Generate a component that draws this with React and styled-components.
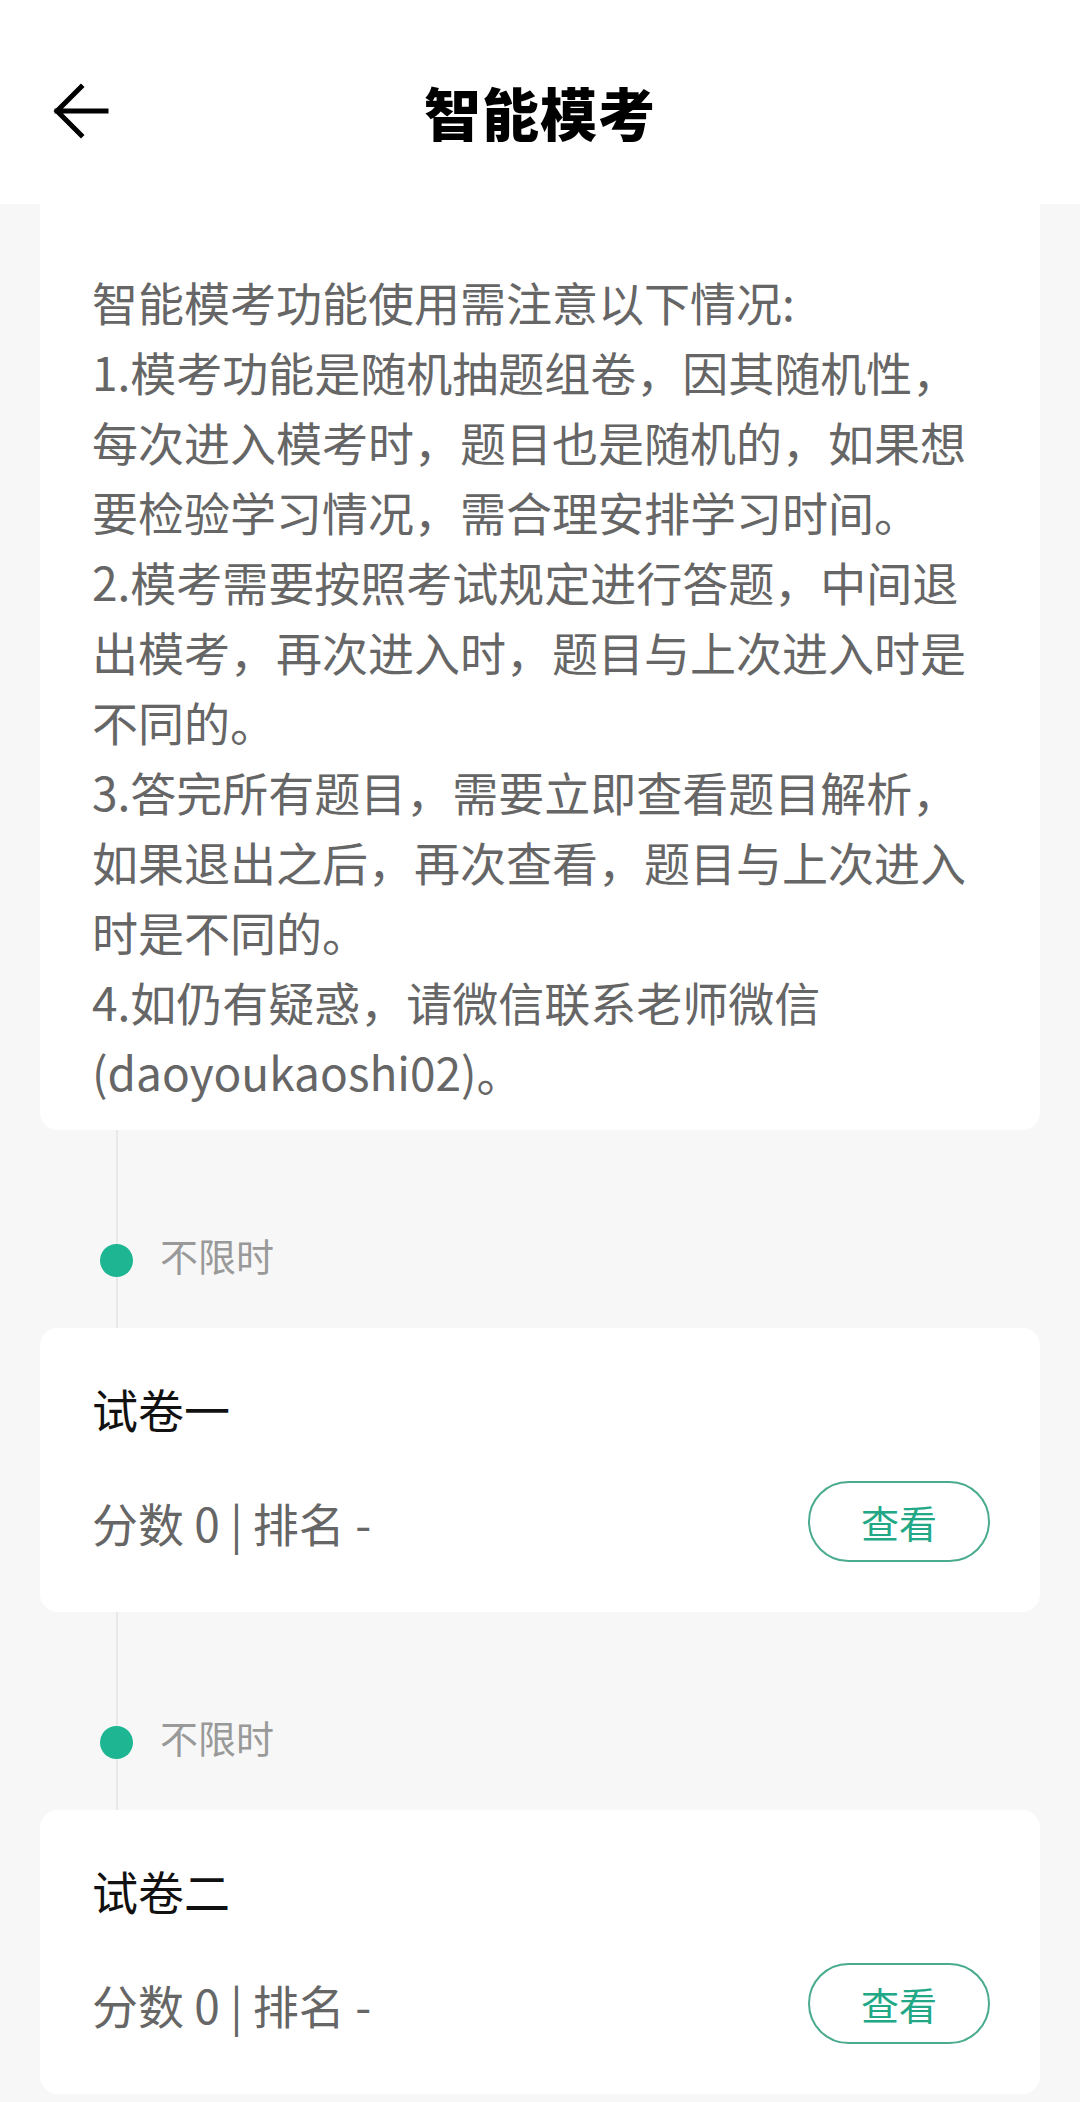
import styled, { createGlobalStyle } from "styled-components";

// ---------- Global ----------
const GlobalStyle = createGlobalStyle`
  html, body {
    margin: 0;
    padding: 0;
    background: #f7f7f7;
  }
  body {
    font-family: "Noto Sans CJK SC", "Noto Sans", sans-serif;
  }
  * {
    box-sizing: border-box;
  }
`;

// ---------- Styled components ----------
const Page = styled.div`
  width: 1080px;
  min-height: 2102px;
  background: #f7f7f7;
  overflow: hidden;
`;

const Header = styled.header`
  height: 204px;
  background: #fff;
  padding-top: 55px;
`;

const HeaderBar = styled.div`
  position: relative;
  height: 112px;
  display: flex;
  align-items: center;
  justify-content: center;
`;

const BackButton = styled.button`
  position: absolute;
  left: 48px;
  top: 28px;
  width: 64px;
  height: 56px;
  padding: 0;
  border: none;
  background: none;
  display: flex;
  align-items: center;
  justify-content: center;
`;

const Title = styled.h1`
  margin: 0;
  font-size: 57px;
  font-weight: 900;
  color: #000;
  letter-spacing: 1px;
`;

const Content = styled.main`
  padding: 0 40px;
`;

const Notice = styled.section`
  background: #fff;
  border-radius: 0 0 18px 18px;
  padding: 62px 52px 24px;
  font-size: 46px;
  line-height: 70px;
  color: #666;
`;

const Para = styled.p`
  margin: 0;
`;

const TimelineGap = styled.div`
  position: relative;
  height: 198px;
  padding-top: 106px;

  &::before {
    content: "";
    position: absolute;
    left: 76px;
    top: 0;
    bottom: 0;
    width: 2px;
    background: #e8e8e8;
  }
`;

const TimeRow = styled.div`
  display: flex;
  align-items: center;
  height: 48px;
  padding-left: 60px;
  gap: 27px;
`;

const Dot = styled.span`
  position: relative;
  width: 33px;
  height: 33px;
  border-radius: 50%;
  background: #1db592;
  flex-shrink: 0;
`;

const TimeLabel = styled.span`
  font-size: 38px;
  color: #999;
  padding-bottom: 12px;
`;

const PaperCard = styled.section`
  background: #fff;
  border-radius: 18px;
  padding: 52px 50px 50px 52px;
`;

const PaperTitle = styled.div`
  font-size: 46px;
  line-height: 56px;
  color: #111;
`;

const PaperRow = styled.div`
  margin-top: 45px;
  display: flex;
  align-items: center;
  justify-content: space-between;
`;

const Score = styled.div`
  font-size: 46px;
  color: #666;
`;

const ViewButton = styled.button`
  width: 182px;
  height: 81px;
  border: 2px solid #4aab8f;
  border-radius: 41px;
  background: #fff;
  color: #22a886;
  font-family: "Noto Sans CJK SC", sans-serif;
  font-size: 38px;
  padding: 0;
`;

// ---------- Data ----------
const notes = [
  "智能模考功能使用需注意以下情况:",
  "1.模考功能是随机抽题组卷，因其随机性，每次进入模考时，题目也是随机的，如果想要检验学习情况，需合理安排学习时间。",
  "2.模考需要按照考试规定进行答题，中间退出模考，再次进入时，题目与上次进入时是不同的。",
  "3.答完所有题目，需要立即查看题目解析，如果退出之后，再次查看，题目与上次进入时是不同的。",
  "4.如仍有疑惑，请微信联系老师微信(daoyoukaoshi02)。",
];

const papers = [
  { name: "试卷一", score: 0, rank: "-", limit: "不限时" },
  { name: "试卷二", score: 0, rank: "-", limit: "不限时" },
];

// ---------- Component ----------
const BackArrow = () => (
  <svg width="60" height="56" viewBox="0 0 60 56" fill="none">
    <path
      d="M56 28H7M31 4L7 28L31 52"
      stroke="#000"
      strokeWidth="5"
      strokeLinecap="square"
    />
  </svg>
);

const App = () => {
  return (
    <Page>
      <GlobalStyle />
      <Header>
        <HeaderBar>
          <BackButton aria-label="返回">
            <BackArrow />
          </BackButton>
          <Title>智能模考</Title>
        </HeaderBar>
      </Header>

      <Content>
        <Notice>
          {notes.map((line, i) => (
            <Para key={i}>{line}</Para>
          ))}
        </Notice>

        {papers.map((paper, index) => (
          <div key={index}>
            <TimelineGap>
              <TimeRow>
                <Dot />
                <TimeLabel>{paper.limit}</TimeLabel>
              </TimeRow>
            </TimelineGap>
            <PaperCard>
              <PaperTitle>{paper.name}</PaperTitle>
              <PaperRow>
                <Score>
                  分数 {paper.score} | 排名 {paper.rank}
                </Score>
                <ViewButton>查看</ViewButton>
              </PaperRow>
            </PaperCard>
          </div>
        ))}
      </Content>
    </Page>
  );
};

export default App;
